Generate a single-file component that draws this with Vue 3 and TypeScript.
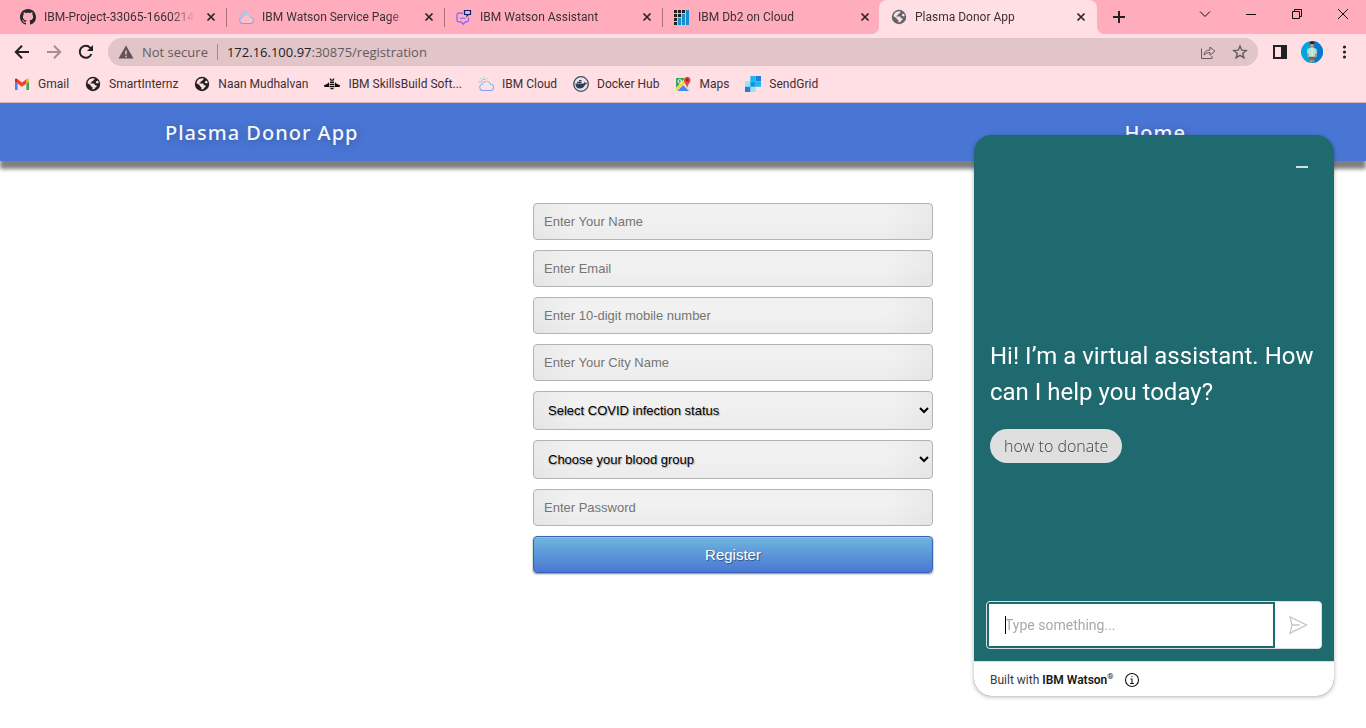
<script setup lang="ts">
import { ref } from 'vue'

type IconName = 'github' | 'cloud' | 'assistant' | 'db2' | 'globe' | 'gmail' | 'bee' | 'docker' | 'maps' | 'sendgrid'

interface LinkItem {
  title: string
  icon: IconName
  active?: boolean
}

const tabs: LinkItem[] = [
  { title: 'IBM-Project-33065-16602142', icon: 'github' },
  { title: 'IBM Watson Service Page', icon: 'cloud' },
  { title: 'IBM Watson Assistant', icon: 'assistant' },
  { title: 'IBM Db2 on Cloud', icon: 'db2' },
  { title: 'Plasma Donor App', icon: 'globe', active: true },
]

const bookmarks: LinkItem[] = [
  { title: 'Gmail', icon: 'gmail' },
  { title: 'SmartInternz', icon: 'globe' },
  { title: 'Naan Mudhalvan', icon: 'globe' },
  { title: 'IBM SkillsBuild Soft...', icon: 'bee' },
  { title: 'IBM Cloud', icon: 'cloud' },
  { title: 'Docker Hub', icon: 'docker' },
  { title: 'Maps', icon: 'maps' },
  { title: 'SendGrid', icon: 'sendgrid' },
]

const textFields = [
  { name: 'name', type: 'text', label: 'Enter Your Name' },
  { name: 'email', type: 'email', label: 'Enter Email' },
  { name: 'phone', type: 'tel', label: 'Enter 10-digit mobile number' },
  { name: 'city', type: 'text', label: 'Enter Your City Name' },
]

const infected = ref('')
const blood = ref('')
const message = ref('')
</script>

<template>
  <svg class="defs" aria-hidden="true">
    <defs>
      <linearGradient id="cloudFill" x1="0" y1="0" x2="0" y2="1">
        <stop offset="0" stop-color="#8fd6e8" />
        <stop offset="1" stop-color="#7f9cf5" />
      </linearGradient>
      <symbol id="i-github" viewBox="0 0 16 16">
        <path fill="#24292f" d="M8 0C3.58 0 0 3.58 0 8c0 3.54 2.29 6.53 5.47 7.59.4.07.55-.17.55-.38 0-.19-.01-.82-.01-1.49-2.01.37-2.53-.49-2.69-.94-.09-.23-.48-.94-.82-1.13-.28-.15-.68-.52-.01-.53.63-.01 1.08.58 1.23.82.72 1.21 1.87.87 2.33.66.07-.52.28-.87.51-1.07-1.78-.2-3.64-.89-3.64-3.95 0-.87.31-1.59.82-2.15-.08-.2-.36-1.02.08-2.12 0 0 .67-.21 2.2.82.64-.18 1.32-.27 2-.27s1.36.09 2 .27c1.53-1.04 2.2-.82 2.2-.82.44 1.1.16 1.92.08 2.12.51.56.82 1.27.82 2.15 0 3.07-1.87 3.75-3.65 3.95.29.25.54.73.54 1.48 0 1.07-.01 1.93-.01 2.2 0 .21.15.46.55.38A8.01 8.01 0 0 0 16 8c0-4.42-3.58-8-8-8Z" />
      </symbol>
      <symbol id="i-cloud" viewBox="0 0 16 16">
        <path fill="#f3e9f6" fill-opacity=".3" stroke="url(#cloudFill)" stroke-width="1.100" d="M4 14.500h8.200a3.200 3.200 0 0 0 .3-6.400A4.300 4.300 0 0 0 4.300 8.300 3.200 3.200 0 0 0 4 14.500Z" />
        <path fill="none" stroke="#7fcbe2" stroke-width="1" d="M3.200 7A3.300 3.300 0 0 1 8 3.500M6.200 .6v1.300M2.300 2l.9.9M.4 5.800h1.300M10.100 2l-.9.9" />
      </symbol>
      <symbol id="i-assistant" viewBox="0 0 16 16">
        <path fill="none" stroke="#7b61ff" stroke-width="1.200" d="M7 4.200H2.500Q1 4.200 1 5.700v5.600q0 1.500 1.500 1.500h2.500l2.200 2.400 2.200-2.400h1.600q1.500 0 1.500-1.500V8.500" />
        <path stroke="#7b61ff" d="M4 9.300h5.500" />
        <path fill="none" stroke="#0a1f6b" stroke-width="1.200" d="M8.500 1.500h6v4h-2.200L11 7V5.500H8.500Z" />
      </symbol>
      <symbol id="i-db2" viewBox="0 0 16 16">
        <path fill="#221f1f" d="M0 1h3v3H0zM4 1h3v3H4zM8 1h3v3H8zM0 5h3v3H0zM4 5h3v3H4zM0 9h3v3H0zM0 13h3v3H0z" />
        <path fill="#1b8fce" d="M12 1h3v15h-3zM8 5h3v11H8zM4 9h3v7H4z" />
      </symbol>
      <symbol id="i-globe" viewBox="0 0 16 16">
        <circle cx="8" cy="8" r="7.200" fill="currentColor" />
        <path fill="#ffdee4" d="M9.600 2.400q.2 1.200-1 1.500-.2 1.300-1.700 1.300-.1 1.500-1.300 1.600l-.3.800h3.500q1.100.3 1.100 1.700h1.300q.8.400.3 1.600-1.500.1-1.600 1.600-.9 1-2.400 1-.3-1.500 0-2.600-2-.2-2-2L2.400 7.200Q3.200 3.300 6.600 2.500q1.500-.5 3-.1Z" />
        <path fill="#ffdee4" d="M10.800 6q.7-1.300 2.200-1.200.7 1.200.7 2.500h-2.200q-.8-.3-.7-1.300Z" />
      </symbol>
      <symbol id="i-gmail" viewBox="0 0 16 16">
        <path fill="#4285f4" d="M1 14h2.600V7.500L1 5.500z" />
        <path fill="#34a853" d="M12.400 14H15V5.500l-2.600 2z" />
        <path fill="#fbbc04" d="M12.400 3.200v4.300L15 5.500V4c0-1.700-1.500-2-2.600-.8Z" />
        <path fill="#ea4335" d="M3.600 7.500V3.200L8 6.500l4.400-3.300v4.300L8 10.800z" />
        <path fill="#c5221f" d="M1 4v1.500l2.600 2V3.200C2.500 2 1 2.300 1 4Z" />
      </symbol>
      <symbol id="i-bee" viewBox="0 0 16 16">
        <path fill="#111" d="M5.500 2.500h1.200l.6 1h1.400l.6-1h1.200l-1 2.300H6.500zM6 5.500h4V7H6zM5.500 7.800h5v1.400h-5zM5.500 10h5v1.300h-5zM6.500 12h3v1.200h-3zM5 6.200v4.800H1.300Q-.2 10.800 0 9.200 3 8.700 5 6.200ZM11 6.200v4.800h3.700q1.500-.2 1.300-1.800-3-.5-5-3Z" />
      </symbol>
      <symbol id="i-docker" viewBox="0 0 16 16">
        <circle cx="8" cy="8" r="7.300" fill="#f3e2e9" stroke="#394d5d" stroke-width="1.300" />
        <path fill="#2b4256" d="M2.300 7.500h8.400q1-.3.700-2 1.200.5 1.100 1.600l1.600.1q-.4 1.300-2 1.400-1.300 4-5.400 4-4 0-4.400-5.100ZM4 5.700h4.500V7H4zM6 4h2.500v1.200H6z" />
      </symbol>
      <symbol id="i-maps" viewBox="0 0 16 16">
        <path fill="#34a853" d="M1 3q0-1 1-1h8L1 12z" />
        <path fill="#4285f4" d="m2 15 6-6 6 6z" />
        <path fill="#fbd24a" d="M1 12 9 4l2 2.500L2.500 15H2q-1 0-1-1z" />
        <path fill="#dfe3e8" d="m9 8.500 3-2.500 3 4v4q0 1-.8 1z" />
        <circle cx="4.700" cy="5.300" r="1.700" fill="none" stroke="#fff" />
        <path fill="#e0453a" d="M12 12q-.3-3-2-4.800Q8.600 5.500 9 3.500 9.800.8 12.300.8q2.600.1 3.200 2.700.3 2-1.300 3.700Q12.500 9 12 12Z" />
        <circle cx="12.300" cy="4" r="1.200" fill="#8b1d18" />
      </symbol>
      <symbol id="i-sendgrid" viewBox="0 0 16 16">
        <path fill="#9de1f3" d="M0 5.300h5.300v5.400H0zM5.300 10.700h5.400V16H5.300z" />
        <path fill="#1a82e2" d="M0 10.700h5.300V16H0zM10.700 0H16v5.300h-5.300z" />
        <path fill="#00a0dc" d="M5.300 5.300h5.400v5.400H5.300z" />
        <path fill="#27b4ec" d="M5.300 0h5.400v5.300H5.300zM10.700 5.300H16v5.400h-5.300z" />
      </symbol>
    </defs>
  </svg>

  <div class="window">
    <header class="browser">
      <div class="tab-strip">
        <div v-for="tab in tabs" :key="tab.title" class="tab" :class="{ active: tab.active }">
          <svg class="icon"><use :href="'#i-' + tab.icon" /></svg>
          <span class="tab-title">{{ tab.title }}</span>
          <button class="tab-close" type="button" aria-label="Close tab">
            <svg viewBox="0 0 16 16"><path d="m4.500 4.500 7 7m0-7-7 7" /></svg>
          </button>
        </div>
        <button class="new-tab" type="button" aria-label="New tab">
          <svg viewBox="0 0 16 16"><path d="M8 2v12M2 8h12" /></svg>
        </button>
        <div class="window-controls">
          <button type="button" aria-label="Search tabs"><svg viewBox="0 0 16 16"><path d="m3 5.500 5 5 5-5" /></svg></button>
          <button type="button" aria-label="Minimize"><svg viewBox="0 0 16 16"><path d="M3 8.500h10" /></svg></button>
          <button type="button" aria-label="Restore"><svg viewBox="0 0 16 16"><path d="M3.500 5.500h7v7h-7zM5.500 5.500v-2h7v7h-2" /></svg></button>
          <button type="button" aria-label="Close"><svg viewBox="0 0 16 16"><path d="m3 3 10 10m0-10L3 13" /></svg></button>
        </div>
      </div>

      <div class="toolbar">
        <button class="tool" type="button" aria-label="Back">
          <svg viewBox="0 0 16 16"><path d="M15 8H2m6-6.200L1.800 8 8 14.200" /></svg>
        </button>
        <button class="tool dim" type="button" aria-label="Forward">
          <svg viewBox="0 0 16 16"><path d="M1 8h13M8 1.800 14.200 8 8 14.200" /></svg>
        </button>
        <button class="tool" type="button" aria-label="Reload">
          <svg viewBox="0 0 16 16"><path d="M13.400 10A6 6 0 1 1 12.300 3.800L13.500 5" /><path class="solid" d="M15 1v6H9z" /></svg>
        </button>
        <div class="omnibox">
          <svg class="warning" viewBox="0 0 16 16"><path fill="#5f5358" fill-rule="evenodd" d="M8 1.500 15.500 14.500H.5ZM7.200 6.500v4h1.600v-4Zm0 5.200v1.600h1.600v-1.600Z" /></svg>
          <span class="insecure">Not secure</span>
          <span class="url"><b>172.16.100.97</b>:30875/registration</span>
          <button class="omni-button" type="button" aria-label="Share">
            <svg viewBox="0 0 16 16"><path d="M1.500 4.500v10H12v-2.500M4 11q.5-5 6-5V3l5 4.200-5 4V8.500Q6 8.300 4 11Z" /></svg>
          </button>
          <button class="omni-button" type="button" aria-label="Bookmark">
            <svg viewBox="0 0 16 16"><path stroke-width="1.400" d="m8 2 1.700 4.200 4.500.3-3.500 2.900 1.200 4.400L8 11.400l-3.900 2.400 1.200-4.400L1.800 6.500l4.500-.3Z" /></svg>
          </button>
        </div>
        <button class="tool" type="button" aria-label="Side panel">
          <svg viewBox="0 0 16 16"><path d="M2 2h12v12H2z" /><path class="solid" d="M9 2h5v12H9z" /></svg>
        </button>
        <button class="tool" type="button" aria-label="Profile">
          <svg class="avatar" viewBox="0 0 22 22">
            <circle cx="11" cy="11" r="11" fill="#00a5e0" />
            <path fill="#0878cf" d="M11 0a11 11 0 0 1 0 22z" />
            <path fill="#c98f6b" d="M9.300 2h3.600v5H9.300zM6.300 10h1.500v6H6.300zM14.300 10h1.500v6h-1.500zM9 17h1.800v4.500H9zM11.400 17h1.800v4.500h-1.800z" />
            <path fill="#2b2226" d="M8.800 1.200Q11 -.8 13.200 1.200V3H8.800z" />
            <path fill="#a9e3d5" d="M6.500 8Q11 5.500 15.500 8l.5 4.500h-1.700v4H7.700v-4H6z" />
            <path fill="#eee6dc" d="M10.500 6.800h1.200V16h-1.200z" />
            <path fill="#73665c" d="M8 15.800h6v3h-2.500l-.5-1-.5 1H8z" />
          </svg>
        </button>
        <button class="tool" type="button" aria-label="Menu">
          <svg viewBox="0 0 16 16"><g class="solid"><circle cx="8.500" cy="3" r="1.600" /><circle cx="8.500" cy="8" r="1.600" /><circle cx="8.500" cy="13" r="1.600" /></g></svg>
        </button>
      </div>

      <nav class="bookmarks">
        <a v-for="mark in bookmarks" :key="mark.title" href="#">
          <svg class="icon"><use :href="'#i-' + mark.icon" /></svg>
          <span>{{ mark.title }}</span>
        </a>
      </nav>
    </header>

    <main class="page">
      <nav class="site-nav">
        <a href="#">Plasma Donor App</a>
        <a href="#">Home</a>
      </nav>

      <form class="registration" @submit.prevent>
        <input
          v-for="field in textFields"
          :key="field.name"
          :type="field.type"
          :name="field.name"
          :placeholder="field.label"
          :aria-label="field.label"
        />
        <select v-model="infected" name="infected" aria-label="COVID infection status">
          <option value="">Select COVID infection status</option>
        </select>
        <select v-model="blood" name="blood" aria-label="Blood group">
          <option value="">Choose your blood group</option>
        </select>
        <input type="password" name="password" placeholder="Enter Password" aria-label="Enter Password" />
        <button type="submit">Register</button>
      </form>
    </main>

    <aside class="chat">
      <div class="chat-header">
        <button type="button" aria-label="Minimize chat"></button>
      </div>
      <div class="chat-body">
        <p>Hi! I’m a virtual assistant. How can I help you today?</p>
        <button type="button">how to donate</button>
      </div>
      <form class="composer" @submit.prevent>
        <div class="composer-field">
          <input v-model="message" type="text" placeholder="Type something..." aria-label="Message" />
          <span class="caret"></span>
        </div>
        <button type="submit" aria-label="Send">
          <svg viewBox="0 0 20 20"><path d="M2 1.800 18.500 10 2 18.200 4 10ZM4 10h7.500" /></svg>
        </button>
      </form>
      <footer class="chat-footer">
        <span>Built with <strong>IBM Watson<sup>®</sup></strong></span>
        <button type="button" aria-label="About">
          <svg viewBox="0 0 16 16"><circle cx="8" cy="8" r="6.500" /><path d="M6.500 7H8v4.500M6 11.500h4M7.500 4.500h1" /></svg>
        </button>
      </footer>
    </aside>
  </div>
</template>

<style>
body {
  background: #fff;
}
</style>

<style scoped>
* {
  box-sizing: border-box;
}

button {
  margin: 0;
  padding: 0;
  border: 0;
  background: none;
  font: inherit;
  color: inherit;
}

a {
  color: inherit;
  text-decoration: none;
}

svg {
  display: block;
  flex: none;
}

.defs {
  position: absolute;
  width: 0;
  height: 0;
}

.window {
  min-height: 100vh;
  overflow: hidden;
}

.icon {
  width: 16px;
  height: 16px;
}

.browser {
  background: #ffdee4;
  border-bottom: 1px solid #d9b5bf;
  font: 12px/16px Roboto, "Open Sans", sans-serif;
  color: #3c3034;
}

.tab-strip {
  display: flex;
  height: 34px;
  padding-left: 8px;
  background: #ffacbc;
}

.tab {
  position: relative;
  display: flex;
  flex: 0 1 218px;
  min-width: 0;
  align-items: center;
  gap: 8px;
  padding: 0 7px 0 12px;
}

.tab + .tab:not(.active)::before {
  content: "";
  position: absolute;
  left: 0;
  top: 8px;
  width: 1px;
  height: 19px;
  background: #a8727d;
}

.tab.active {
  margin-left: -1px;
  padding-right: 8px;
  background: #ffdee4;
  border-radius: 8px 8px 0 0;
  color: #5f6368;
}

.tab.active::before,
.tab.active::after {
  content: "";
  position: absolute;
  bottom: 0;
  width: 8px;
  height: 8px;
}

.tab.active::before {
  right: 100%;
  background: radial-gradient(circle at 0 0, transparent 8px, #ffdee4 8px);
}

.tab.active::after {
  left: 100%;
  background: radial-gradient(circle at 100% 0, transparent 8px, #ffdee4 8px);
}

.tab-title {
  flex: 1;
  min-width: 0;
  white-space: nowrap;
  color: #3c3034;
  mask-image: linear-gradient(to right, #000 calc(100% - 24px), transparent);
}

.tab-close svg {
  width: 16px;
  height: 16px;
  fill: none;
  stroke: #2b2226;
  stroke-width: 1.7;
}

.new-tab {
  width: 28px;
  margin-left: 14px;
}

.new-tab svg {
  width: 16px;
  height: 16px;
  fill: none;
  stroke: #202124;
  stroke-width: 2;
}

.window-controls {
  display: flex;
  height: 28px;
  margin-left: auto;
}

.window-controls button {
  display: flex;
  align-items: center;
  justify-content: center;
  width: 46px;
}

.window-controls svg {
  width: 16px;
  height: 16px;
  fill: none;
  stroke: #111;
  stroke-width: 1;
}

.toolbar {
  display: flex;
  align-items: center;
  height: 36px;
  padding: 0 6px;
}

.tool {
  display: flex;
  justify-content: center;
  width: 32px;
}

.tool svg {
  width: 16px;
  height: 16px;
  fill: none;
  stroke: #202124;
  stroke-width: 2;
}

.tool .solid {
  fill: #202124;
  stroke: none;
}

.tool.dim svg {
  stroke: #a58f95;
}

.tool .avatar {
  width: 22px;
  height: 22px;
  stroke: none;
}

.omnibox {
  display: flex;
  flex: 1;
  align-items: center;
  height: 28px;
  margin: 0 6px;
  padding: 0 2px 0 10px;
  border-radius: 14px;
  background: #e1c5c9;
  font: 13px/20px "Open Sans", "Noto Sans", sans-serif;
  color: #66595d;
}

.warning {
  width: 16px;
  height: 16px;
}

.insecure {
  margin-left: 8px;
  padding-right: 9px;
  border-right: 1px solid #a08a8f;
  line-height: 16px;
}

.url {
  flex: 1;
  padding-left: 9px;
}

.url b {
  font-weight: 400;
  color: #202124;
}

.omni-button {
  display: flex;
  justify-content: center;
  width: 32px;
}

.omni-button svg {
  width: 16px;
  height: 16px;
  fill: none;
  stroke: #66595d;
}

.bookmarks {
  display: flex;
  align-items: center;
  gap: 16px;
  height: 32px;
  padding: 0 14px 4px;
}

.bookmarks a {
  display: flex;
  align-items: center;
  gap: 8px;
  white-space: nowrap;
}

.bookmarks .icon {
  color: #202124;
}

.site-nav {
  display: flex;
  align-items: center;
  justify-content: space-between;
  height: 58px;
  padding: 2px 180px 0 165px;
  background: #4976d4;
  box-shadow: 0 8px 4px gray;
  font: 500 20px/28px "Noto Sans", "Open Sans", sans-serif;
  letter-spacing: 1px;
  color: #f4f6fc;
  text-shadow: 1px 1px 8px rgba(0, 0, 0, 0.3);
}

.registration {
  display: flex;
  flex-direction: column;
  gap: 10px;
  width: 400px;
  margin: 42px auto 0;
  position: relative;
  left: 50px;
}

.registration input,
.registration select,
.registration button {
  width: 100%;
  padding: 10px;
  border: 1px solid #b3b3b3;
  border-radius: 4px;
  font: 13px/15px "Liberation Sans", Arial, sans-serif;
}

.registration input,
.registration select {
  background:
    linear-gradient(to right, rgba(0, 0, 0, 0.03), transparent 10%, transparent 88%, rgba(0, 0, 0, 0.03)),
    linear-gradient(#f1f1f1 40%, #ececec);
}

.registration input {
  height: 37px;
}

.registration input::placeholder {
  color: #757575;
}

.registration select {
  height: 39px;
  color: #000;
  text-shadow: 1px 1px 1px rgba(0, 0, 0, 0.3);
}

.registration button {
  height: 37px;
  border-color: #3762bc;
  background: linear-gradient(#6eb6de, #4a77d4);
  box-shadow: inset 0 1px 0 rgba(255, 255, 255, 0.2), 0 1px 2px rgba(0, 0, 0, 0.5);
  font-size: 15px;
  color: #fff;
  text-shadow: 1px 1px 1px rgba(0, 0, 0, 0.4);
}

.chat {
  position: fixed;
  right: 32px;
  bottom: 32px;
  display: flex;
  flex-direction: column;
  width: 360px;
  height: calc(100vh - 167px);
  overflow: hidden;
  border-radius: 18px;
  background: #1f6a6f;
  box-shadow: 0 1px 4px rgba(0, 0, 0, 0.3);
  font: 14px/18px Roboto, "Noto Sans", sans-serif;
}

.chat-header {
  display: flex;
  justify-content: flex-end;
  padding: 16px;
}

.chat-header button {
  display: flex;
  align-items: center;
  justify-content: center;
  width: 32px;
  height: 32px;
}

.chat-header button::before {
  content: "";
  width: 12px;
  height: 2px;
  background: #d2e1e2;
}

.chat-body {
  display: flex;
  flex: 1;
  flex-direction: column;
  align-items: flex-start;
  justify-content: center;
  gap: 19px;
  padding: 1px 16px 0;
}

.chat-body p {
  margin: 0;
  font-size: 24px;
  line-height: 36px;
  color: #fff;
}

.chat-body button {
  height: 34px;
  padding: 0 14px;
  border-radius: 17px;
  background: #dfdfdf;
  font-family: "Open Sans", "Noto Sans", sans-serif;
  font-size: 16px;
  font-weight: 350;
  color: #444;
}

.composer {
  display: flex;
  height: 48px;
  margin: 0 12px 12px;
  overflow: hidden;
  border: 1px solid #d6dfe0;
  border-radius: 4px;
  background: #fff;
}

.composer-field {
  position: relative;
  display: flex;
  flex: 1;
}

.composer-field input {
  flex: 1;
  min-width: 0;
  padding: 0 16px;
  border: 2px solid #1f6a6f;
  background: #fff;
  font: inherit;
  color: #161616;
}

.composer-field input::placeholder {
  color: #a8a8a8;
}

.caret {
  position: absolute;
  left: 18px;
  top: 14px;
  width: 1px;
  height: 18px;
  background: #000;
}

.composer button {
  display: flex;
  align-items: center;
  justify-content: center;
  width: 46px;
}

.composer svg {
  width: 20px;
  height: 20px;
  fill: none;
  stroke: #c6c6c6;
  stroke-width: 1.3;
}

.chat-footer {
  display: flex;
  align-items: center;
  gap: 10px;
  height: 35px;
  padding: 2px 16px 0;
  background: #fff;
  border-top: 1px solid #e0e0e0;
  font-size: 12px;
  line-height: 16px;
  color: #393939;
}

.chat-footer strong {
  font-weight: 600;
  color: #161616;
}

.chat-footer sup {
  font-size: 8px;
  line-height: 8px;
}

.chat-footer svg {
  width: 16px;
  height: 16px;
  fill: none;
  stroke: #161616;
  stroke-width: 1.1;
}
</style>
